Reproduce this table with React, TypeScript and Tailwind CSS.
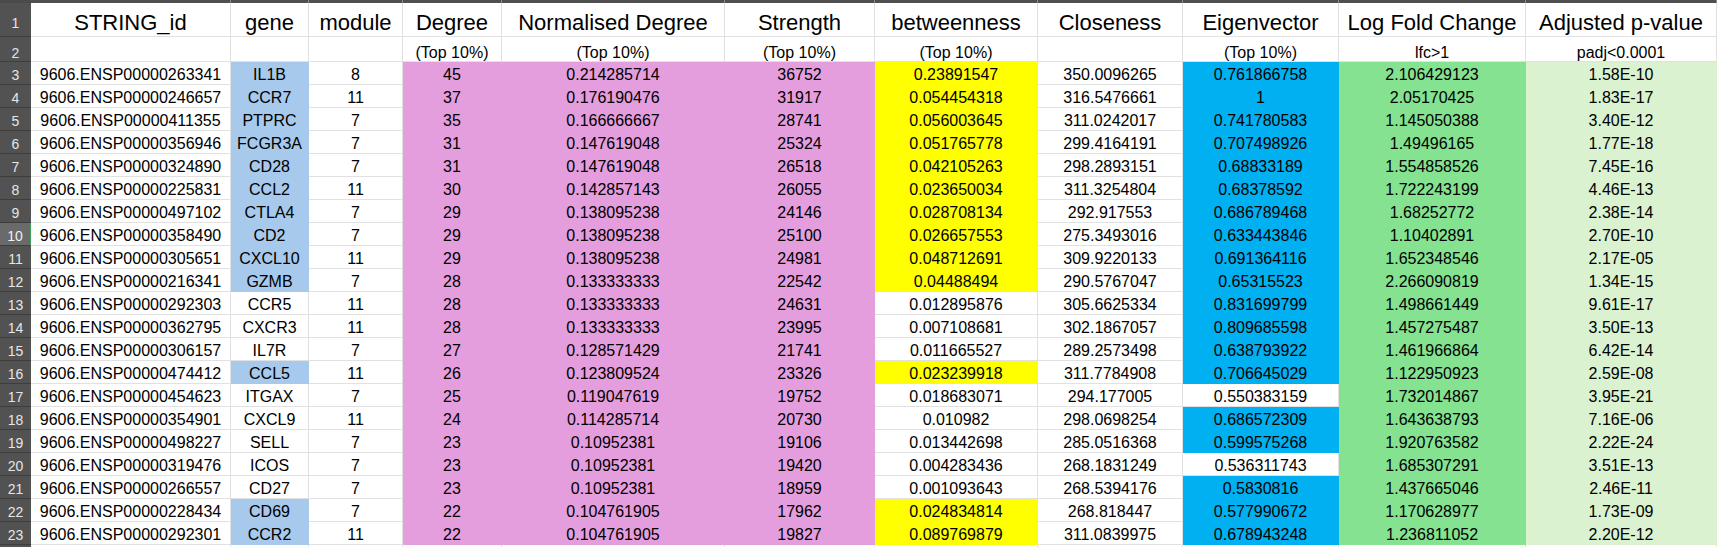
import React from "react";

type Row = {
  id: string;
  gene: string;
  module: number;
  degree: number;
  norm: string;
  strength: number;
  btw: string;
  close: string;
  eig: string;
  lfc: string;
  padj: string;
  geneHi: boolean;
  btwHi: boolean;
  eigHi: boolean;
};

const data: Row[] = [
  { id: "9606.ENSP00000263341", gene: "IL1B", module: 8, degree: 45, norm: "0.214285714", strength: 36752, btw: "0.23891547", close: "350.0096265", eig: "0.761866758", lfc: "2.106429123", padj: "1.58E-10", geneHi: true, btwHi: true, eigHi: true },
  { id: "9606.ENSP00000246657", gene: "CCR7", module: 11, degree: 37, norm: "0.176190476", strength: 31917, btw: "0.054454318", close: "316.5476661", eig: "1", lfc: "2.05170425", padj: "1.83E-17", geneHi: true, btwHi: true, eigHi: true },
  { id: "9606.ENSP00000411355", gene: "PTPRC", module: 7, degree: 35, norm: "0.166666667", strength: 28741, btw: "0.056003645", close: "311.0242017", eig: "0.741780583", lfc: "1.145050388", padj: "3.40E-12", geneHi: true, btwHi: true, eigHi: true },
  { id: "9606.ENSP00000356946", gene: "FCGR3A", module: 7, degree: 31, norm: "0.147619048", strength: 25324, btw: "0.051765778", close: "299.4164191", eig: "0.707498926", lfc: "1.49496165", padj: "1.77E-18", geneHi: true, btwHi: true, eigHi: true },
  { id: "9606.ENSP00000324890", gene: "CD28", module: 7, degree: 31, norm: "0.147619048", strength: 26518, btw: "0.042105263", close: "298.2893151", eig: "0.68833189", lfc: "1.554858526", padj: "7.45E-16", geneHi: true, btwHi: true, eigHi: true },
  { id: "9606.ENSP00000225831", gene: "CCL2", module: 11, degree: 30, norm: "0.142857143", strength: 26055, btw: "0.023650034", close: "311.3254804", eig: "0.68378592", lfc: "1.722243199", padj: "4.46E-13", geneHi: true, btwHi: true, eigHi: true },
  { id: "9606.ENSP00000497102", gene: "CTLA4", module: 7, degree: 29, norm: "0.138095238", strength: 24146, btw: "0.028708134", close: "292.917553", eig: "0.686789468", lfc: "1.68252772", padj: "2.38E-14", geneHi: true, btwHi: true, eigHi: true },
  { id: "9606.ENSP00000358490", gene: "CD2", module: 7, degree: 29, norm: "0.138095238", strength: 25100, btw: "0.026657553", close: "275.3493016", eig: "0.633443846", lfc: "1.10402891", padj: "2.70E-10", geneHi: true, btwHi: true, eigHi: true },
  { id: "9606.ENSP00000305651", gene: "CXCL10", module: 11, degree: 29, norm: "0.138095238", strength: 24981, btw: "0.048712691", close: "309.9220133", eig: "0.691364116", lfc: "1.652348546", padj: "2.17E-05", geneHi: true, btwHi: true, eigHi: true },
  { id: "9606.ENSP00000216341", gene: "GZMB", module: 7, degree: 28, norm: "0.133333333", strength: 22542, btw: "0.04488494", close: "290.5767047", eig: "0.65315523", lfc: "2.266090819", padj: "1.34E-15", geneHi: true, btwHi: true, eigHi: true },
  { id: "9606.ENSP00000292303", gene: "CCR5", module: 11, degree: 28, norm: "0.133333333", strength: 24631, btw: "0.012895876", close: "305.6625334", eig: "0.831699799", lfc: "1.498661449", padj: "9.61E-17", geneHi: false, btwHi: false, eigHi: true },
  { id: "9606.ENSP00000362795", gene: "CXCR3", module: 11, degree: 28, norm: "0.133333333", strength: 23995, btw: "0.007108681", close: "302.1867057", eig: "0.809685598", lfc: "1.457275487", padj: "3.50E-13", geneHi: false, btwHi: false, eigHi: true },
  { id: "9606.ENSP00000306157", gene: "IL7R", module: 7, degree: 27, norm: "0.128571429", strength: 21741, btw: "0.011665527", close: "289.2573498", eig: "0.638793922", lfc: "1.461966864", padj: "6.42E-14", geneHi: false, btwHi: false, eigHi: true },
  { id: "9606.ENSP00000474412", gene: "CCL5", module: 11, degree: 26, norm: "0.123809524", strength: 23326, btw: "0.023239918", close: "311.7784908", eig: "0.706645029", lfc: "1.122950923", padj: "2.59E-08", geneHi: true, btwHi: true, eigHi: true },
  { id: "9606.ENSP00000454623", gene: "ITGAX", module: 7, degree: 25, norm: "0.119047619", strength: 19752, btw: "0.018683071", close: "294.177005", eig: "0.550383159", lfc: "1.732014867", padj: "3.95E-21", geneHi: false, btwHi: false, eigHi: false },
  { id: "9606.ENSP00000354901", gene: "CXCL9", module: 11, degree: 24, norm: "0.114285714", strength: 20730, btw: "0.010982", close: "298.0698254", eig: "0.686572309", lfc: "1.643638793", padj: "7.16E-06", geneHi: false, btwHi: false, eigHi: true },
  { id: "9606.ENSP00000498227", gene: "SELL", module: 7, degree: 23, norm: "0.10952381", strength: 19106, btw: "0.013442698", close: "285.0516368", eig: "0.599575268", lfc: "1.920763582", padj: "2.22E-24", geneHi: false, btwHi: false, eigHi: true },
  { id: "9606.ENSP00000319476", gene: "ICOS", module: 7, degree: 23, norm: "0.10952381", strength: 19420, btw: "0.004283436", close: "268.1831249", eig: "0.536311743", lfc: "1.685307291", padj: "3.51E-13", geneHi: false, btwHi: false, eigHi: false },
  { id: "9606.ENSP00000266557", gene: "CD27", module: 7, degree: 23, norm: "0.10952381", strength: 18959, btw: "0.001093643", close: "268.5394176", eig: "0.5830816", lfc: "1.437665046", padj: "2.46E-11", geneHi: false, btwHi: false, eigHi: true },
  { id: "9606.ENSP00000228434", gene: "CD69", module: 7, degree: 22, norm: "0.104761905", strength: 17962, btw: "0.024834814", close: "268.818447", eig: "0.577990672", lfc: "1.170628977", padj: "1.73E-09", geneHi: true, btwHi: true, eigHi: true },
  { id: "9606.ENSP00000292301", gene: "CCR2", module: 11, degree: 22, norm: "0.104761905", strength: 19827, btw: "0.089769879", close: "311.0839975", eig: "0.678943248", lfc: "1.236811052", padj: "2.20E-12", geneHi: true, btwHi: true, eigHi: true },
];

// fill colours, border matches the fill so gridlines disappear like in excel
const fill = {
  none: "bg-white border-[#e1e1e1]",
  gene: "bg-[#a6c9ec] border-[#a6c9ec]",
  pink: "bg-[#e59edd] border-[#e59edd]",
  yellow: "bg-[#ffff00] border-[#ffff00]",
  blue: "bg-[#00b0f0] border-[#00b0f0]",
  green: "bg-[#84e291] border-[#84e291]",
  pale: "bg-[#daf2d0] border-[#daf2d0]",
};

const headers = [
  { title: "STRING_id", sub: "" },
  { title: "gene", sub: "" },
  { title: "module", sub: "" },
  { title: "Degree", sub: "(Top 10%)" },
  { title: "Normalised Degree", sub: "(Top 10%)" },
  { title: "Strength", sub: "(Top 10%)" },
  { title: "betweenness", sub: "(Top 10%)" },
  { title: "Closeness", sub: "" },
  { title: "Eigenvector", sub: "(Top 10%)" },
  { title: "Log Fold Change", sub: "lfc>1" },
  { title: "Adjusted p-value", sub: "padj<0.0001" },
];

const Cell = ({ children, color }: { children?: React.ReactNode; color: string }) => (
  <div className={`h-[23px] border-r border-b flex items-center justify-center pt-1 text-[16px] leading-none text-black whitespace-nowrap overflow-hidden ${color}`}>
    {children}
  </div>
);

const RowNum = ({ n, active }: { n?: number; active?: boolean }) => (
  <div
    className={
      active
        ? "h-[23px] bg-[#6a6a6a] border-b border-[#3d3d3d] border-r border-r-[#3fa35a] flex items-center justify-center pt-1 text-[14px] leading-none text-[#f0f0f0]"
        : "h-[23px] bg-[#525252] border-b border-[#3d3d3d] flex items-center justify-center pt-1 text-[14px] leading-none text-[#e6e6e6]"
    }
  >
    {n}
  </div>
);

export default function App() {
  return (
    <div className="h-screen overflow-hidden bg-white font-['Liberation_Sans',Arial,sans-serif]">
      <div className="grid grid-cols-[31px_200px_78px_94px_99px_223px_150px_163px_145px_156px_187px_1fr]">
        {/* strip of the column letter bar that is left at the top */}
        <div className="h-[3px] bg-[#4a4a4a]" />
        {headers.map((h) => (
          <div key={"bar" + h.title} className="h-[3px] bg-[#4f4f4f] border-r border-[#8a8a8a]" />
        ))}

        {/* row 1 */}
        <div className="h-[34px] bg-[#525252] border-b border-[#3d3d3d] flex items-center justify-center pt-[6px] text-[14px] leading-none text-[#e6e6e6]">
          1
        </div>
        {headers.map((h) => (
          <div
            key={h.title}
            className="h-[34px] bg-white border-r border-b border-[#e1e1e1] flex items-center justify-center pt-[6px] text-[22px] leading-none text-black whitespace-nowrap overflow-hidden"
          >
            {h.title}
          </div>
        ))}

        {/* row 2 */}
        <div className="h-[25px] bg-[#525252] border-b border-[#3d3d3d] flex items-center justify-center pt-2 text-[14px] leading-none text-[#e6e6e6]">
          2
        </div>
        {headers.map((h) => (
          <div
            key={"sub" + h.title}
            className="h-[25px] bg-white border-r border-b border-[#e1e1e1] flex items-center justify-center pt-2 text-[16px] leading-none text-black whitespace-nowrap"
          >
            {h.sub}
          </div>
        ))}

        {data.map((r, i) => (
          <React.Fragment key={r.id}>
            <RowNum n={i + 3} active={i + 3 === 10} />
            <Cell color={fill.none}>{r.id}</Cell>
            <Cell color={r.geneHi ? fill.gene : fill.none}>{r.gene}</Cell>
            <Cell color={fill.none}>{r.module}</Cell>
            <Cell color={fill.pink}>{r.degree}</Cell>
            <Cell color={fill.pink}>{r.norm}</Cell>
            <Cell color={fill.pink}>{r.strength}</Cell>
            <Cell color={r.btwHi ? fill.yellow : fill.none}>{r.btw}</Cell>
            <Cell color={fill.none}>{r.close}</Cell>
            <Cell color={r.eigHi ? fill.blue : fill.none}>{r.eig}</Cell>
            <Cell color={fill.green}>{r.lfc}</Cell>
            <Cell color={fill.pale}>{r.padj}</Cell>
          </React.Fragment>
        ))}

        {/* next row, only its top edge shows */}
        <RowNum />
        {headers.map((h) => (
          <Cell key={"empty" + h.title} color={fill.none} />
        ))}
      </div>
    </div>
  );
}
